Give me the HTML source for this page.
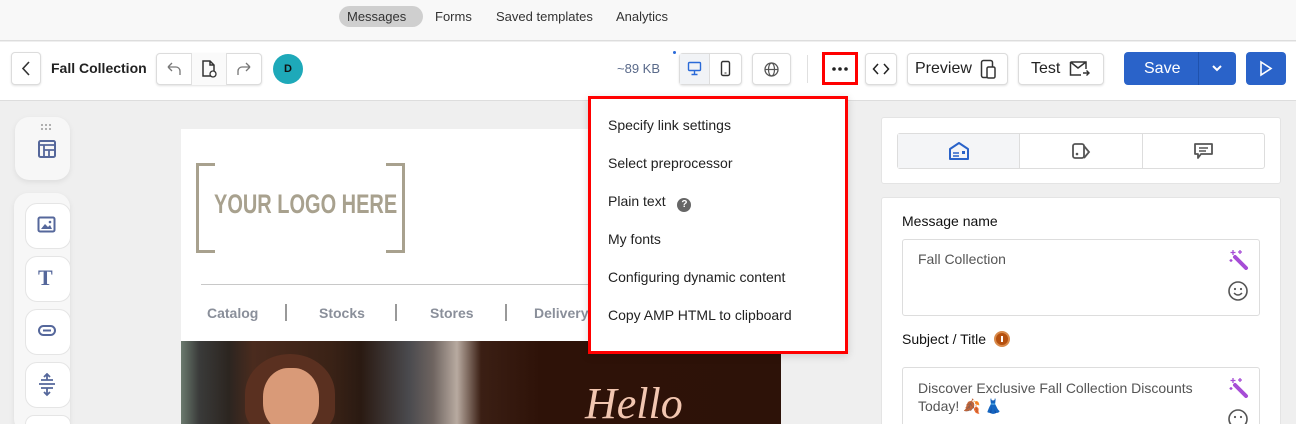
<!DOCTYPE html>
<html><head><meta charset="utf-8"><style>
*{box-sizing:border-box;margin:0;padding:0}
html{width:1296px;height:424px;overflow:hidden}
body{width:1296px;height:424px;overflow:hidden;background:#efefef;font-family:"Liberation Sans",sans-serif;position:relative;color:#222}
.abs{position:absolute}
.top{left:0;top:0;width:1296px;height:41px;background:#f8f8f8;border-bottom:1px solid #ddd}
.tab{top:6px;height:21px;font-size:13px;line-height:21px;color:#333}
.bar{left:0;top:42px;width:1296px;height:59px;background:#fff;border-bottom:1px solid #ddd}
.btn{background:#fff;border:1px solid #dcdcdc;border-radius:4px;box-shadow:0 1px 2px rgba(0,0,0,.12)}
.menu{left:588px;top:96px;width:260px;height:258px;background:#fff;border:3px solid #f00}
.menu div{position:absolute;left:17px;font-size:14px;color:#222}
.panel{background:#fff;border:1px solid #e4e4e4;border-radius:3px}
.side{background:#f7f7f7;border-radius:14px;box-shadow:0 2px 6px rgba(0,0,0,.08)}
.tool{left:25px;width:46px;height:46px;background:#fff;border:1px solid #e5e5e5;border-radius:12px}
</style></head><body>
<div class="abs top"></div>
<div class="abs" style="left:339px;top:6px;width:84px;height:21px;background:#cfcfcf;border-radius:11px"></div>
<div class="abs tab" style="left:347px">Messages</div>
<div class="abs tab" style="left:435px">Forms</div>
<div class="abs tab" style="left:496px">Saved templates</div>
<div class="abs tab" style="left:616px">Analytics</div>

<div class="abs bar"></div>
<div class="abs btn" style="left:11px;top:52px;width:30px;height:33px"></div>
<svg class="abs" style="left:19px;top:60px" width="14" height="17"><path d="M10 2 L4 8.5 L10 15" stroke="#333" stroke-width="1.6" fill="none"/></svg>
<div class="abs" style="left:51px;top:60px;font-size:14px;font-weight:bold;color:#222">Fall Collection</div>
<div class="abs btn" style="left:156px;top:53px;width:106px;height:32px"></div>
<div class="abs" style="left:191px;top:53px;width:36px;height:32px;border-left:1px solid #e0e0e0;border-right:1px solid #e0e0e0;background:#fafafa"></div>
<svg class="abs" style="left:164px;top:60px" width="18" height="18"><path d="M4 7 H12 a4 4 0 0 1 4 4 V15 M4 7 l4 -4 M4 7 l4 4" stroke="#777" stroke-width="1.3" fill="none"/></svg>
<svg class="abs" style="left:200px;top:59px" width="18" height="20"><path d="M3 2 H10 L14 6 V17 H3 Z M10 2 V6 H14" stroke="#333" stroke-width="1.5" fill="none"/><circle cx="13" cy="15" r="3" fill="#fff" stroke="#333" stroke-width="1.3"/></svg>
<svg class="abs" style="left:236px;top:60px" width="18" height="18"><path d="M14 7 H6 a4 4 0 0 0 -4 4 V15 M14 7 l-4 -4 M14 7 l-4 4" stroke="#777" stroke-width="1.3" fill="none"/></svg>
<div class="abs" style="left:273px;top:54px;width:30px;height:30px;border-radius:50%;background:#1ea9b9;color:#111;font-size:11px;font-weight:bold;text-align:center;line-height:30px">D</div>

<div class="abs" style="left:617px;top:61px;font-size:13px;color:#5a6a8a">~89 KB</div>
<div class="abs" style="left:673px;top:51px;width:3px;height:3px;border-radius:50%;background:#2a6ad8"></div>
<div class="abs btn" style="left:679px;top:53px;width:63px;height:32px"></div>
<div class="abs" style="left:680px;top:54px;width:30px;height:30px;background:#f1f3f6;border-right:1px solid #ddd"></div>
<svg class="abs" style="left:687px;top:61px" width="16" height="15"><rect x="1.5" y="1.5" width="12" height="8" rx="1" stroke="#2a6ad8" stroke-width="1.4" fill="none"/><path d="M7.5 10 v3 M4.5 13.5 h6" stroke="#2a6ad8" stroke-width="1.4"/></svg>
<svg class="abs" style="left:720px;top:60px" width="12" height="17"><rect x="1.5" y="1.5" width="8" height="14" rx="1.5" stroke="#333" stroke-width="1.4" fill="none"/><path d="M4.5 13h2" stroke="#333"/></svg>
<div class="abs btn" style="left:752px;top:53px;width:39px;height:32px"></div>
<svg class="abs" style="left:763px;top:61px" width="17" height="17"><circle cx="8.5" cy="8.5" r="6.5" stroke="#555" stroke-width="1.3" fill="none"/><ellipse cx="8.5" cy="8.5" rx="3" ry="6.5" stroke="#555" stroke-width="1.2" fill="none"/><path d="M2 8.5h13" stroke="#555" stroke-width="1.2"/></svg>
<div class="abs" style="left:807px;top:55px;width:1px;height:28px;background:#e0e0e0"></div>
<div class="abs" style="left:822px;top:52px;width:36px;height:33px;border:3px solid #f00;background:#fff"></div>
<svg class="abs" style="left:825px;top:55px" width="30" height="27"><circle cx="9" cy="14" r="1.8" fill="#222"/><circle cx="15" cy="14" r="1.8" fill="#222"/><circle cx="21" cy="14" r="1.8" fill="#222"/></svg>
<div class="abs btn" style="left:865px;top:53px;width:32px;height:32px"></div>
<svg class="abs" style="left:872px;top:62px" width="18" height="14"><path d="M6 2 L1.5 7 L6 12 M12 2 L16.5 7 L12 12" stroke="#222" stroke-width="1.5" fill="none"/></svg>
<div class="abs btn" style="left:907px;top:53px;width:101px;height:32px"></div>
<div class="abs" style="left:915px;top:60px;font-size:16px;color:#222">Preview</div>
<svg class="abs" style="left:980px;top:59px" width="18" height="21"><rect x="1.5" y="1.5" width="11" height="17" rx="2" stroke="#333" stroke-width="1.5" fill="none"/><rect x="7" y="8" width="8" height="11" rx="1.5" fill="#fff" stroke="#333" stroke-width="1.5"/></svg>
<div class="abs btn" style="left:1018px;top:53px;width:86px;height:32px"></div>
<div class="abs" style="left:1031px;top:60px;font-size:16px;color:#222">Test</div>
<svg class="abs" style="left:1069px;top:60px" width="22" height="18"><path d="M1.5 2 H17 V9 M1.5 2 V15 H12 M1.5 2 L9 8 L17 2" stroke="#333" stroke-width="1.5" fill="none"/><path d="M14 13 H20 M17.5 10.5 L20 13 L17.5 15.5" stroke="#333" stroke-width="1.4" fill="none"/></svg>
<div class="abs" style="left:1124px;top:52px;width:112px;height:33px;background:#2a63c9;border-radius:4px"></div>
<div class="abs" style="left:1198px;top:52px;width:1px;height:33px;background:#1f52ad"></div>
<div class="abs" style="left:1144px;top:60px;font-size:16px;color:#fff">Save</div>
<svg class="abs" style="left:1211px;top:64px" width="12" height="9"><path d="M2 2 L6 6 L10 2" stroke="#fff" stroke-width="2" fill="none"/></svg>
<div class="abs" style="left:1246px;top:52px;width:40px;height:33px;background:#2a63c9;border-radius:4px"></div>
<svg class="abs" style="left:1258px;top:60px" width="16" height="17"><path d="M3 2 L13 8.5 L3 15 Z" stroke="#fff" stroke-width="1.6" fill="none"/></svg>

<!-- left sidebar -->
<div class="abs side" style="left:15px;top:117px;width:55px;height:63px"></div>
<svg class="abs" style="left:40px;top:123px" width="16" height="8"><g fill="#999"><circle cx="2" cy="2" r="1"/><circle cx="6" cy="2" r="1"/><circle cx="10" cy="2" r="1"/><circle cx="2" cy="6" r="1"/><circle cx="6" cy="6" r="1"/><circle cx="10" cy="6" r="1"/></g></svg>
<svg class="abs" style="left:37px;top:139px" width="20" height="20"><rect x="2" y="2" width="16" height="16" rx="1.5" stroke="#55679b" stroke-width="2" fill="none"/><path d="M2 6h16 M7 6v12 M7 11h11 M12 11v7" stroke="#55679b" stroke-width="1.8" fill="none"/></svg>
<div class="abs side" style="left:14px;top:193px;width:56px;height:240px"></div>
<div class="abs tool" style="top:203px"></div>
<svg class="abs" style="left:37px;top:216px" width="20" height="18"><rect x="1.5" y="1.5" width="16" height="14" rx="1.5" stroke="#55679b" stroke-width="2" fill="none"/><path d="M4 13 L8 8 L11 11 L13 9 L15 13 Z" fill="#55679b"/><circle cx="13" cy="6" r="1.3" fill="#55679b"/></svg>
<div class="abs tool" style="top:256px"></div>
<div class="abs" style="left:38px;top:265px;font-family:'Liberation Serif',serif;font-size:22px;font-weight:bold;color:#55679b">T</div>
<div class="abs tool" style="top:309px"></div>
<svg class="abs" style="left:37px;top:324px" width="20" height="14"><rect x="2" y="2" width="16" height="9" rx="4.5" stroke="#55679b" stroke-width="2" fill="none"/><path d="M6 6.5h8" stroke="#55679b" stroke-width="2"/></svg>
<div class="abs tool" style="top:362px"></div>
<svg class="abs" style="left:37px;top:373px" width="20" height="24"><path d="M2 11h16 M4 7h12 M4 15h12 M10 1v6 M10 15v7 M7 4l3-3 3 3 M7 19l3 3 3-3" stroke="#55679b" stroke-width="1.8" fill="none"/></svg>
<div class="abs tool" style="top:415px;height:9px;border-bottom:none;border-radius:12px 12px 0 0"></div>

<!-- canvas -->
<div class="abs" style="left:181px;top:129px;width:600px;height:212px;background:#fff"></div>
<div class="abs" style="left:196px;top:163px;width:19px;height:90px;border:3px solid #a8a18e;border-right:none"></div>
<div class="abs" style="left:386px;top:163px;width:19px;height:90px;border:3px solid #a8a18e;border-left:none"></div>
<div class="abs" style="left:214px;top:189px;font-size:27px;font-weight:bold;color:#a8a18e;transform:scaleX(.74);transform-origin:left;letter-spacing:0">YOUR LOGO HERE</div>
<div class="abs" style="left:201px;top:284px;width:400px;height:1px;background:#c8c8c8"></div>
<div class="abs" style="left:207px;top:305px;font-size:14px;font-weight:bold;color:#8a8f9a">Catalog</div>
<div class="abs" style="left:285px;top:304px;width:2px;height:17px;background:#999"></div>
<div class="abs" style="left:319px;top:305px;font-size:14px;font-weight:bold;color:#8a8f9a">Stocks</div>
<div class="abs" style="left:395px;top:304px;width:2px;height:17px;background:#999"></div>
<div class="abs" style="left:430px;top:305px;font-size:14px;font-weight:bold;color:#8a8f9a">Stores</div>
<div class="abs" style="left:505px;top:304px;width:2px;height:17px;background:#999"></div>
<div class="abs" style="left:534px;top:305px;font-size:14px;font-weight:bold;color:#8a8f9a">Delivery</div>
<div class="abs" style="left:181px;top:341px;width:600px;height:83px;background:linear-gradient(90deg,#6b7a6e 0,#3a3b3a 3%,#2c2520 8%,#4a2b1e 12%,#3a2216 25%,#2a1a12 30%,#4a4a4e 38%,#6e6460 42%,#b8aaa0 46%,#3b1f14 50%,#2e1208 60%,#2d1208 100%)"></div>
<div class="abs" style="left:245px;top:354px;width:90px;height:80px;border-radius:50% 50% 30% 30%;background:#5a3020"></div>
<div class="abs" style="left:263px;top:368px;width:56px;height:64px;border-radius:45%;background:#d99a78"></div>
<div class="abs" style="left:585px;top:378px;font-family:'Liberation Serif',serif;font-style:italic;font-size:44px;color:#f2c6b0">Hello</div>

<!-- menu -->
<div class="abs menu" style="box-shadow:0 2px 8px rgba(0,0,0,.15)">
<div style="top:18px">Specify link settings</div>
<div style="top:56px">Select preprocessor</div>
<div style="top:94px">Plain text <span style="display:inline-block;width:14px;height:14px;border-radius:50%;background:#666;color:#fff;font-size:10px;font-weight:bold;text-align:center;line-height:14px;margin-left:8px;vertical-align:-1px">?</span></div>
<div style="top:132px">My fonts</div>
<div style="top:170px">Configuring dynamic content</div>
<div style="top:208px">Copy AMP HTML to clipboard</div>
</div>

<!-- right panel -->
<div class="abs panel" style="left:881px;top:117px;width:400px;height:67px"></div>
<div class="abs" style="left:897px;top:133px;width:368px;height:36px;border:1px solid #ddd;border-radius:3px"></div>
<div class="abs" style="left:898px;top:134px;width:122px;height:34px;background:#f4f5f7;border-right:1px solid #ddd"></div>
<div class="abs" style="left:1142px;top:134px;width:1px;height:34px;background:#ddd"></div>
<svg class="abs" style="left:948px;top:141px" width="22" height="20"><path d="M2 8 L11 2 L20 8 V18 H2 Z" stroke="#2a63c9" stroke-width="2" fill="none" stroke-linejoin="round"/><path d="M5 12h6 M5 15h6" stroke="#2a63c9" stroke-width="1.6"/><rect x="14" y="10" width="3" height="3" fill="#2a63c9"/></svg>
<svg class="abs" style="left:1071px;top:142px" width="20" height="18"><rect x="2" y="2" width="11" height="14" rx="2" stroke="#555" stroke-width="1.8" fill="none"/><path d="M13 4 L18 10 L13 16" stroke="#555" stroke-width="1.8" fill="none"/><circle cx="6" cy="12" r="1.3" fill="#555"/></svg>
<svg class="abs" style="left:1193px;top:142px" width="21" height="19"><path d="M2 2 H19 V12 H8 L5 16 V12 H2 Z" stroke="#555" stroke-width="1.8" fill="none" stroke-linejoin="round"/><path d="M6 6h9 M6 9h7" stroke="#555" stroke-width="1.6"/></svg>

<div class="abs panel" style="left:881px;top:197px;width:400px;height:240px"></div>
<div class="abs" style="left:902px;top:213px;font-size:14px;color:#111">Message name</div>
<div class="abs" style="left:902px;top:239px;width:358px;height:77px;border:1px solid #ddd;border-radius:3px;background:#fff"></div>
<div class="abs" style="left:918px;top:251px;font-size:14px;color:#555">Fall Collection</div>
<svg class="abs" style="left:1228px;top:248px" width="22" height="22"><path d="M7 9 L18 20" stroke="#a64dd6" stroke-width="4" stroke-linecap="round"/><path d="M5 2v5 M2.5 4.5h5 M12 2v4 M10 4h4 M3 11v3 M1.5 12.5h3" stroke="#a64dd6" stroke-width="1.3"/></svg>
<svg class="abs" style="left:1227px;top:280px" width="22" height="22"><circle cx="11" cy="11" r="9" stroke="#555" stroke-width="1.6" fill="none"/><circle cx="8" cy="9" r="1.1" fill="#555"/><circle cx="14" cy="9" r="1.1" fill="#555"/><path d="M7 13 q4 4 8 0" stroke="#555" stroke-width="1.5" fill="none"/></svg>
<div class="abs" style="left:902px;top:331px;font-size:14px;color:#111">Subject / Title</div>
<div class="abs" style="left:994px;top:331px;width:16px;height:16px;border-radius:50%;background:#b5500f;border:2px solid #d98a4a"><div style="width:2px;height:6px;background:#fff;margin:3px auto 0"></div></div>
<div class="abs" style="left:902px;top:367px;width:358px;height:70px;border:1px solid #ddd;border-radius:3px;background:#fff"></div>
<div class="abs" style="left:918px;top:379px;font-size:14px;color:#555;line-height:18px">Discover Exclusive Fall Collection Discounts<br>Today! <span style="color:#d9572a">🍂</span> <span style="color:#3a7ad9">👗</span></div>
<svg class="abs" style="left:1228px;top:376px" width="22" height="22"><path d="M7 9 L18 20" stroke="#a64dd6" stroke-width="4" stroke-linecap="round"/><path d="M5 2v5 M2.5 4.5h5 M12 2v4 M10 4h4 M3 11v3 M1.5 12.5h3" stroke="#a64dd6" stroke-width="1.3"/></svg>
<svg class="abs" style="left:1227px;top:408px" width="22" height="22"><circle cx="11" cy="11" r="9" stroke="#555" stroke-width="1.6" fill="none"/><circle cx="8" cy="9" r="1.1" fill="#555"/><circle cx="14" cy="9" r="1.1" fill="#555"/></svg>
</body></html>
